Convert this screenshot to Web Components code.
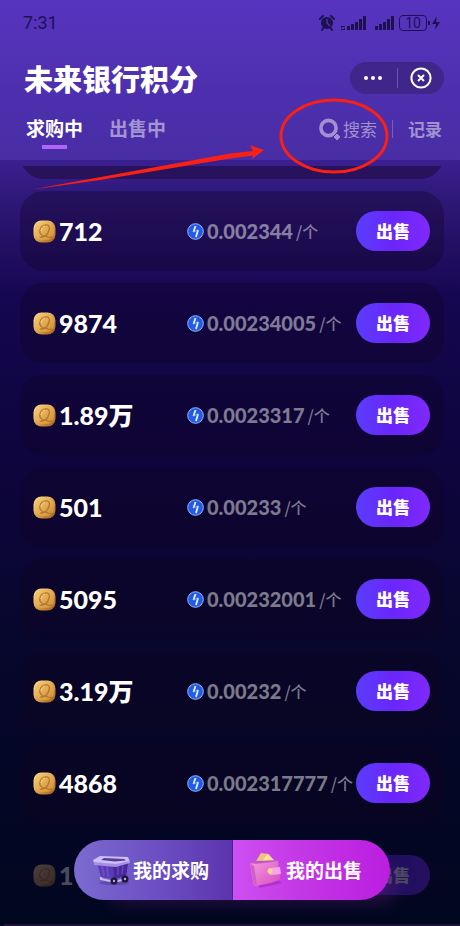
<!DOCTYPE html>
<html lang="zh-CN">
<head>
<meta charset="utf-8">
<meta name="viewport" content="width=device-width, initial-scale=1">
<title>未来银行积分</title>
<style>
  * { box-sizing: border-box; }
  html { height: 100%; background: #020720; }
  body {
    margin: 0;
    height: 100%;
    overflow: hidden;
    font-family: Lato, "Noto Sans CJK SC", sans-serif;
    color: #fff;
  }
</style>
</head>
<body>
<points-market>
  <market-header slot="header" heading="未来银行积分"></market-header>
  <order-row amount="712" price="0.002344"></order-row>
  <order-row amount="9874" price="0.00234005"></order-row>
  <order-row amount="1.89万" price="0.0023317"></order-row>
  <order-row amount="501" price="0.00233"></order-row>
  <order-row amount="5095" price="0.00232001"></order-row>
  <order-row amount="3.19万" price="0.00232"></order-row>
  <order-row amount="4868" price="0.002317777"></order-row>
  <order-row amount="1" faded></order-row>
  <trade-dock slot="dock"></trade-dock>
  <hand-mark slot="mark"></hand-mark>
</points-market>

<script>
// Page shell: header, clipped list, dock
class PointsMarket extends HTMLElement {
  constructor() {
    super();
    this.attachShadow({ mode: 'open' });
    this.shadowRoot.innerHTML = `
      <style>
        * { box-sizing: border-box; }
        :host {
          display: flex;
          flex-direction: column;
          position: relative;
          height: 100%;
          overflow: hidden;
          background: linear-gradient(#4a2ca4 0, #3a2090 160px, #2f197a 195px, #200e60 255px, #150650 300px, #110646 370px, #0e053e 460px, #08062e 620px, #030625 780px, #020720 100%);
        }
        main {
          flex: 1;
          min-height: 0;
          margin-top: 6px;
          padding: 0 16px 0 20px;
          overflow: hidden;
          display: flex;
          flex-direction: column;
          gap: 12px;
        }
        /* tail of the card scrolled under the header */
        .tail {
          flex: none;
          height: 13px;
          overflow: hidden;
          display: flex;
          align-items: flex-end;
        }
        .tail div {
          flex: 1 0 auto;
          height: 80px;
          border-radius: 24px;
          background: #27125b;
        }
      </style>
      <slot name="header"></slot>
      <main>
        <div class="tail"><div></div></div>
        <slot></slot>
      </main>
      <slot name="dock"></slot>
      <slot name="mark"></slot>
    `;
  }
}

class StatusBar extends HTMLElement {
  constructor() {
    super();
    this.attachShadow({ mode: 'open' });
    this.shadowRoot.innerHTML = `
      <style>
        * { box-sizing: border-box; }
        :host {
          display: flex;
          align-items: center;
          justify-content: space-between;
          height: 46px;
          padding: 0 19px 0 23px;
          font-family: Roboto, sans-serif;
          color: #1e1150;
        }
        .time { font-size: 18px; line-height: 20px; }
        .icons { display: flex; align-items: center; }
        svg { display: block; fill: currentColor; }
        .second { margin: 0 5px 0 8px; }
        .battery {
          width: 28px;
          height: 16px;
          border: 1px solid;
          border-radius: 4px;
          font-size: 14px;
          line-height: 14px;
          text-align: center;
        }
      </style>
      <span class="time">7:31</span>
      <span class="icons">
        <svg width="16" height="16" viewBox="0 0 16 16">
          <circle cx="8" cy="8" r="6"/>
          <path d="M1 4 4 1M15 4 12 1M3 15l2-3M13 15l-2-3" stroke="currentColor" stroke-width="2" stroke-linecap="round"/>
          <path d="M8 4v4l3 3" fill="none" stroke="#5231b3" stroke-width="1.4"/>
        </svg>
        <svg width="32" height="16" viewBox="0 0 32 16">
          <path d="M6 11h4v1H7v1h3v2H6v-1h3v-1H6zM12 11h3v4h-3zM16 9h3v6h-3zM20 7h3v8h-3zM24 4h3v11h-3zM28 1h3v14h-3z"/>
        </svg>
        <svg class="second" width="19" height="16" viewBox="0 0 19 16">
          <path d="M0 11h3v4H0zM4 9h3v6H4zM8 7h3v8H8zM12 4h3v11h-3zM16 1h3v14h-3z"/>
        </svg>
        <span class="battery">10</span>
        <svg width="14" height="16" viewBox="0 0 14 16">
          <path d="M1 6h2v4H1zM10 1 5 9h4l-1 6 5-8H9z"/>
        </svg>
      </span>
    `;
  }
}

class MarketHeader extends HTMLElement {
  constructor() {
    super();
    this.attachShadow({ mode: 'open' });
  }

  connectedCallback() {
    this.shadowRoot.innerHTML = `
      <style>
        * { box-sizing: border-box; }
        :host {
          display: block;
          flex: none;
          height: 160px;
          background: linear-gradient(#5834c0, #4e30b0 50%, #482da4);
        }
        button {
          border: 0;
          padding: 0;
          background: none;
          color: inherit;
          font: inherit;
          cursor: pointer;
        }
        svg { display: block; }
        .title {
          display: flex;
          align-items: center;
          justify-content: space-between;
          height: 32px;
          margin-top: 16px;
          padding: 0 16px 0 24px;
        }
        h1 {
          margin: 0;
          font: 900 29px/32px "Noto Sans CJK SC", sans-serif;
        }
        .capsule {
          display: flex;
          align-items: center;
          width: 94px;
          height: 32px;
          border-radius: 16px;
          background: #3e268b;
        }
        .capsule button { flex: 1; display: flex; justify-content: center; }
        .capsule i { width: 1px; height: 20px; background: #6b56ab; }
        .tabs {
          display: flex;
          align-items: flex-start;
          justify-content: space-between;
          margin-top: 21px;
          padding: 0 18px 0 26px;
        }
        nav { display: flex; gap: 26px; }
        nav button {
          display: flex;
          flex-direction: column;
          align-items: center;
          gap: 4px;
          font: 700 19px/26px "Noto Sans CJK SC", sans-serif;
          color: #a394d3;
        }
        nav .on { color: #fff; }
        nav .on::after {
          content: "";
          width: 25px;
          height: 4px;
          background: #b263fa;
        }
        .tools {
          display: flex;
          align-items: center;
          height: 28px;
          color: #a092cf;
          font: 400 17px/26px "Noto Sans CJK SC", sans-serif;
        }
        .search { display: flex; align-items: center; gap: 2px; }
        .tools i { width: 1px; height: 18px; margin: 0 15px; background: #7660bd; }
        .log { font-weight: 700; }
      </style>
      <status-bar></status-bar>
      <div class="title">
        <h1>${this.getAttribute('heading')}</h1>
        <div class="capsule">
          <button aria-label="更多">
            <svg width="20" height="6" viewBox="0 0 20 6" fill="#fff">
              <circle cx="3" cy="3" r="2"/><circle cx="10" cy="3" r="2"/><circle cx="17" cy="3" r="2"/>
            </svg>
          </button>
          <i></i>
          <button aria-label="关闭">
            <svg width="22" height="22" viewBox="0 0 22 22" fill="none" stroke="#fff" stroke-width="2">
              <circle cx="11" cy="11" r="9.6"/>
              <path d="m8 8 6 6m0-6-6 6"/>
            </svg>
          </button>
        </div>
      </div>
      <div class="tabs">
        <nav>
          <button class="on">求购中</button>
          <button>出售中</button>
        </nav>
        <div class="tools">
          <button class="search">
            <svg width="22" height="24" viewBox="0 0 22 24">
              <circle cx="9.500" cy="11" r="7.600" fill="none" stroke="currentColor" stroke-width="3.600"/>
              <path d="m18 16 4 4-4 4-4-4z" fill="currentColor" stroke="#4a2da6" stroke-width="1"/>
            </svg>
            <span>搜索</span>
          </button>
          <i></i>
          <button class="log">记录</button>
        </div>
      </div>
    `;
  }
}

// One buy order: amount, unit price, sell button
class OrderRow extends HTMLElement {
  constructor() {
    super();
    this.attachShadow({ mode: 'open' });
  }

  connectedCallback() {
    const amount = this.getAttribute('amount');
    const price = this.getAttribute('price');

    this.shadowRoot.innerHTML = `
      <style>
        * { box-sizing: border-box; }
        :host {
          display: grid;
          grid-template-columns: 154px 1fr 74px;
          align-items: center;
          flex: none;
          height: 80px;
          padding: 0 14px 0 13px;
          border-radius: 24px;
          background: rgba(14, 4, 30, .32);
        }
        :host([faded]) { background: none; }
        :host([faded]) > * { opacity: .28; }
        .faded { opacity: .28; }
        svg { display: block; flex: none; }
        .amount, .price { display: flex; align-items: center; white-space: nowrap; }
        .amount {
          gap: 3px;
          font: 900 25px/32px Lato, "Noto Sans CJK SC", sans-serif;
        }
        .price {
          grid-column: 2;
          gap: 3px;
          color: rgba(255, 255, 255, .47);
          font: 900 20px/28px Lato, sans-serif;
        }
        .unit { font: 500 16px/28px "Noto Sans CJK SC", sans-serif; }
        button {
          grid-column: 3;
          height: 40px;
          border: 0;
          padding: 0;
          border-radius: 20px;
          background: linear-gradient(90deg, #593dfc, #6a26fb 50%, #8029fb);
          color: #fff;
          font: 900 17px/24px "Noto Sans CJK SC", sans-serif;
          cursor: pointer;
        }
      </style>
      <div class="amount ${price ? '' : 'faded'}">
        <svg width="23" height="23" viewBox="0 0 23 23">
          <defs>
            <linearGradient id="gold" x1="0" y1="0" x2="1" y2="1">
              <stop offset="0" stop-color="#ffe79c"/>
              <stop offset=".5" stop-color="#dfa245"/>
              <stop offset="1" stop-color="#a05c18"/>
            </linearGradient>
            <linearGradient id="face" x1="0" y1="0" x2="1" y2="1">
              <stop offset="0" stop-color="#f6cd76"/>
              <stop offset="1" stop-color="#cf8b35"/>
            </linearGradient>
          </defs>
          <rect x=".5" y=".5" width="22" height="22" rx="8" fill="url(#gold)"/>
          <rect x="2" y="1.500" width="19" height="18.500" rx="7" fill="url(#face)"/>
          <path d="M9 15c-4-2-2-9 3-10 4-1 5 2 4 5-1 4-4 7-8 7 2-2 5-1 7 0s3 1 4 0" fill="none" stroke="#b57829" stroke-width="1.300" stroke-linecap="round"/>
          <path d="M8 11c0-3 2-5 4-5" fill="none" stroke="#fbe09a" stroke-width=".8"/>
        </svg>
        <span>${amount}</span>
      </div>
      ${price ? `<div class="price">
        <svg width="17" height="17" viewBox="0 0 17 17">
          <circle cx="8.500" cy="8.500" r="7.800" fill="#225be9" stroke="#9ab8ee" stroke-width="1"/>
          <path d="m8.500 3-2 6M11 7 9 14" stroke="#e5f1ff" stroke-width="1.800"/>
          <path d="m6 9 5-2" stroke="#a8c6ff" stroke-width=".7"/>
        </svg>
        <span>${price}</span><span class="unit">/个</span>
      </div>` : ''}
      <button class="${price ? '' : 'faded'}">出售</button>
    `;
  }
}

class TradeDock extends HTMLElement {
  constructor() {
    super();
    this.attachShadow({ mode: 'open' });
    this.shadowRoot.innerHTML = `
      <style>
        * { box-sizing: border-box; }
        /* floats over the end of the list */
        :host {
          display: flex;
          justify-content: center;
          position: absolute;
          left: 4px;
          right: 0;
          bottom: 0;
          padding-bottom: 24px;
          border-bottom: 2px solid #1d1238;
        }
        nav {
          display: flex;
          border-radius: 30px;
          overflow: hidden;
          box-shadow: 20px 14px 18px -12px rgba(104, 30, 130, .4);
        }
        button {
          display: flex;
          align-items: center;
          gap: 2px;
          width: 158px;
          height: 60px;
          border: 0;
          padding: 0 0 0 18px;
          background: linear-gradient(90deg, #7b6bd0, #6a4bc0 60%, #5c34ad);
          color: #fff;
          font: 700 19px/28px "Noto Sans CJK SC", sans-serif;
          white-space: nowrap;
          cursor: pointer;
        }
        .sell {
          padding-left: 15px;
          border-left: 1px solid #4b248f;
          background: linear-gradient(90deg, #cd4ff0, #c234e4 50%, #bb1ee0);
        }
        svg { display: block; flex: none; }
      </style>
      <nav>
        <button>
          <svg width="39" height="32" viewBox="0 0 39 32">
            <ellipse cx="22" cy="29" rx="15" ry="2" fill="#4a3394" opacity=".5"/>
            <path d="M9 23v2l13 3 12-3" fill="none" stroke="#cbbcf6" stroke-width="2"/>
            <path d="m5 9 4 14 13 2 12-3 2-14z" fill="#5b3bb4"/>
            <path d="m21 10 1 15 12-3 2-13z" fill="#47299a"/>
            <path d="m10 12 2 10M15 12l1 11" stroke="#6c4dc6" stroke-width="2"/>
            <path d="M26 12v9M31 12l-1 8" stroke="#6646bf" stroke-width="1.500"/>
            <path d="m1 6 7-4 28 1 2 5-14 3L2 9z" fill="#cdbdf9"/>
            <path d="m9 6 3-2 20 1 2 1.500-11 1z" fill="#583c96"/>
            <path d="m2 8 22 2 14-3v2l-14 4L2 11z" fill="#a78fe6"/>
            <circle cx="22" cy="27" r="3.500" fill="#1c1833"/><circle cx="22" cy="27" r="1.200" fill="#b6a8df"/>
            <circle cx="33" cy="25" r="3.500" fill="#1c1833"/><circle cx="33" cy="25" r="1.200" fill="#b6a8df"/>
          </svg>
          <span>我的求购</span>
        </button>
        <button class="sell">
          <svg width="36" height="38" viewBox="0 0 36 38">
            <defs>
              <linearGradient id="wallet" x1="0" y1="0" x2="1" y2="1">
                <stop offset="0" stop-color="#f69be2"/>
                <stop offset="1" stop-color="#d54cbd"/>
              </linearGradient>
            </defs>
            <path d="m9 32 21-3 4 3-22 5z" fill="#9020aa" opacity=".45"/>
            <path d="m7 12 6-10 8 1 2 9z" fill="#efc57b"/>
            <path d="m12 12 8-9 7 7v5z" fill="#ffe0a0"/>
            <path d="m2 12 4-2 24-1 1 4-24 3z" fill="#c15bc2"/>
            <path d="M2 12q5 2 28-2l2 18q-2 3-24 7-3-1-3-4z" fill="url(#wallet)"/>
            <path d="m2 12 4 3 3 19-3-1z" fill="#cf61c4"/>
            <path d="m21 17 11-1 1 7-11 1q-4-3-1-7z" fill="#f6a6e7"/>
            <circle cx="22" cy="20" r="2.500" fill="#ffd889"/>
          </svg>
          <span>我的出售</span>
        </button>
      </nav>
    `;
  }
}

// Red arrow and ring pointing at the search button
class HandMark extends HTMLElement {
  constructor() {
    super();
    this.attachShadow({ mode: 'open' });
    this.shadowRoot.innerHTML = `
      <style>
        :host {
          display: block;
          position: absolute;
          top: 90px;
          right: 60px;
          pointer-events: none;
        }
        svg { display: block; }
      </style>
      <svg width="370" height="110" viewBox="30 90 370 110">
        <ellipse cx="334" cy="136" rx="53" ry="36" fill="none" stroke="#fb2015" stroke-width="3"/>
        <path d="M32 189.500 230 153.500 253 151 250 145 264 150 252 159 253 155.500 230 158.500 100 180z" fill="#fb2015"/>
      </svg>
    `;
  }
}

customElements.define('status-bar', StatusBar);
customElements.define('market-header', MarketHeader);
customElements.define('order-row', OrderRow);
customElements.define('trade-dock', TradeDock);
customElements.define('hand-mark', HandMark);
customElements.define('points-market', PointsMarket);
</script>
</body>
</html>
